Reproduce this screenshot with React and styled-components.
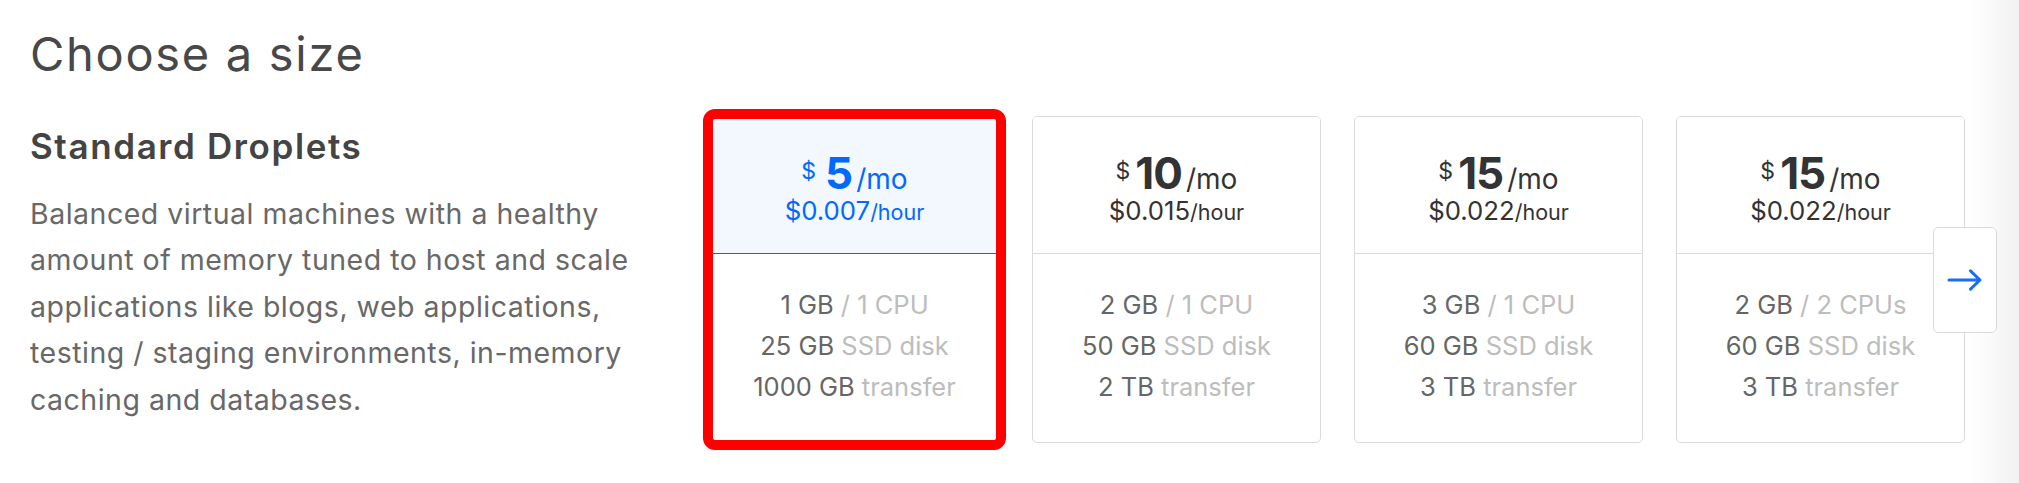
import React from "react";
import styled, { createGlobalStyle } from "styled-components";

const GlobalStyle = createGlobalStyle`
  html, body {
    margin: 0;
    padding: 0;
    background: #ffffff;
  }
  body {
    font-family: "Inter", "Noto Sans", sans-serif;
    -webkit-font-smoothing: antialiased;
  }
`;

const Page = styled.main`
  width: 2019px;
  height: 483px;
  box-sizing: border-box;
  padding: 30px 0 0 30px;
  overflow: hidden;
  position: relative;
`;

const Title = styled.h1`
  margin: 0 0 39px;
  font-size: 47px;
  line-height: 47px;
  font-weight: 400;
  letter-spacing: 1.7px;
  color: #484848;
`;

const Row = styled.div`
  display: flex;
  align-items: flex-start;
`;

const Intro = styled.section`
  flex: 0 0 680px;
  display: flex;
  flex-direction: column;
`;

const Subtitle = styled.h2`
  margin: 13px 0 27px;
  font-size: 35px;
  line-height: 35px;
  font-weight: 600;
  letter-spacing: 1.6px;
  color: #444444;
`;

const Description = styled.p`
  margin: 0;
  font-size: 28.5px;
  line-height: 46.4px;
  font-weight: 400;
  letter-spacing: 0.5px;
  color: #686868;
  white-space: nowrap;
`;

const Carousel = styled.div`
  flex: 1 1 auto;
  min-width: 0;
  position: relative;
`;

const Track = styled.div`
  display: flex;
  gap: 33px;
`;

const Card = styled.div`
  flex: 0 0 289px;
  box-sizing: border-box;
  height: 327px;
  display: flex;
  flex-direction: column;
  border: 1px solid #dadada;
  border-radius: 5px;
  background: #ffffff;
  overflow: hidden;
  outline: ${(p) => (p.$highlight ? "10px solid #ff0000" : "none")};
  outline-offset: -3px;
`;

const CardHead = styled.div`
  flex: 0 0 137px;
  box-sizing: border-box;
  padding-top: 31px;
  display: flex;
  flex-direction: column;
  align-items: center;
  background: ${(p) => (p.$selected ? "#f3f7fe" : "#ffffff")};
  border-bottom: 1px solid ${(p) => (p.$selected ? "#0069ff" : "#dadada")};
  color: ${(p) => (p.$selected ? "#0069ff" : "#333333")};
`;

const Monthly = styled.div`
  height: 46px;
  line-height: 46px;
  white-space: nowrap;
`;

const Currency = styled.span`
  font-size: 23px;
  font-weight: 400;
  vertical-align: 10px;
  margin-right: ${(p) => (p.$wide ? "9px" : "5px")};
`;

const Amount = styled.span`
  font-size: 44px;
  font-weight: 700;
  letter-spacing: -1px;
`;

const Per = styled.span`
  font-size: 28px;
  font-weight: 400;
  margin-left: 4px;
`;

const Hourly = styled.div`
  height: 34px;
  line-height: 34px;
  font-size: 25.75px;
  white-space: nowrap;
`;

const HourUnit = styled.span`
  font-size: 21.5px;
`;

const CardBody = styled.div`
  flex: 1 1 auto;
  padding-top: 30px;
  display: flex;
  flex-direction: column;
  align-items: center;
`;

const Spec = styled.div`
  font-size: 25.5px;
  line-height: 41px;
  color: #666666;
  white-space: nowrap;
`;

const Unit = styled.span`
  color: #bdbdbd;
`;

const NextButton = styled.button`
  position: absolute;
  top: 111px;
  right: 22px;
  width: 64px;
  height: 106px;
  box-sizing: border-box;
  padding: 0;
  border: 1px solid #dadada;
  border-radius: 5px;
  background: #ffffff;
  display: flex;
  align-items: center;
  justify-content: center;
  cursor: pointer;
`;

const Fade = styled.div`
  position: absolute;
  top: -116px;
  right: 0;
  width: 50px;
  height: 483px;
  pointer-events: none;
  background: linear-gradient(to right, rgba(242, 242, 242, 0), rgba(242, 242, 242, 1));
`;

const plans = [
  { price: "5", hourly: "$0.007", mem: "1 GB", cpu: "/ 1 CPU", disk: "25 GB", transfer: "1000 GB", selected: true },
  { price: "10", hourly: "$0.015", mem: "2 GB", cpu: "/ 1 CPU", disk: "50 GB", transfer: "2 TB" },
  { price: "15", hourly: "$0.022", mem: "3 GB", cpu: "/ 1 CPU", disk: "60 GB", transfer: "3 TB" },
  { price: "15", hourly: "$0.022", mem: "2 GB", cpu: "/ 2 CPUs", disk: "60 GB", transfer: "3 TB" },
];

function ArrowRightIcon() {
  return (
    <svg width="36" height="24" viewBox="0 0 36 24" fill="none" aria-hidden="true">
      <path
        d="M2 12H33M23.5 2.8L33 12L23.5 21.2"
        stroke="#1a6cf5"
        strokeWidth="3"
        strokeLinecap="round"
        strokeLinejoin="round"
      />
    </svg>
  );
}

export default function App() {
  return (
    <>
      <GlobalStyle />
      <Page>
        <Title>Choose a size</Title>
        <Row>
          <Intro>
            <Subtitle>Standard Droplets</Subtitle>
            <Description>
              Balanced virtual machines with a healthy
              <br />
              amount of memory tuned to host and scale
              <br />
              applications like blogs, web applications,
              <br />
              testing / staging environments, in-memory
              <br />
              caching and databases.
            </Description>
          </Intro>
          <Carousel>
            <Track>
              {plans.map((p, i) => (
                <Card key={i} $highlight={p.selected}>
                  <CardHead $selected={p.selected}>
                    <Monthly>
                      <Currency $wide={p.selected}>$</Currency>
                      <Amount>{p.price}</Amount>
                      <Per>/mo</Per>
                    </Monthly>
                    <Hourly>
                      {p.hourly}
                      <HourUnit>/hour</HourUnit>
                    </Hourly>
                  </CardHead>
                  <CardBody>
                    <Spec>
                      {p.mem} <Unit>{p.cpu}</Unit>
                    </Spec>
                    <Spec>
                      {p.disk} <Unit>SSD disk</Unit>
                    </Spec>
                    <Spec>
                      {p.transfer} <Unit>transfer</Unit>
                    </Spec>
                  </CardBody>
                </Card>
              ))}
            </Track>
            <Fade />
            <NextButton aria-label="Next sizes">
              <ArrowRightIcon />
            </NextButton>
          </Carousel>
        </Row>
      </Page>
    </>
  );
}
